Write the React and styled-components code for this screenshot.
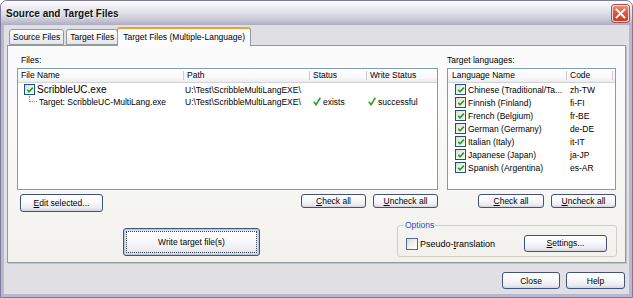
import React from 'react';
import styled, { createGlobalStyle } from 'styled-components';

const Global = createGlobalStyle`
  html, body { margin: 0; padding: 0; background: #ffffff; }
  body { font-family: "Liberation Sans", Arial, sans-serif; font-size: 8.5px; color: #000; }
  * { box-sizing: border-box; }
`;

const Window = styled.div`
  width: 633px;
  height: 298px;
  display: flex;
  flex-direction: column;
  background: #b9b8cf;
  border: 1px solid #7c7b99;
  border-radius: 7px 7px 0 0;
  overflow: hidden;
`;

const TitleBar = styled.div`
  height: 24px;
  flex: none;
  display: flex;
  align-items: center;
  padding: 0 3px 0 5px;
  background: linear-gradient(#fdfdfe 0%, #eeeef4 25%, #dcdce6 55%, #c6c6d6 80%, #adacc4 100%);
`;

const Title = styled.div`
  flex: 1;
  font-size: 10px;
  font-weight: bold;
  color: #141414;
  text-shadow: 1px 1px 0 rgba(255,255,255,0.6);
`;

const CloseBox = styled.div`
  width: 17px;
  height: 17px;
  border-radius: 3px;
  border: 1px solid #f4d4cc;
  background: linear-gradient(#ee8e74 0%, #dd5a3c 45%, #c83c22 100%);
  box-shadow: 0 0 0 1px #a8504a;
  display: flex;
  align-items: center;
  justify-content: center;
`;

const Body = styled.div`
  flex: 1;
  margin: 0 3px 3px 3px;
  background: #e0dfe3;
  display: flex;
  flex-direction: column;
`;

const TabStrip = styled.div`
  height: 20px;
  flex: none;
  display: flex;
  align-items: flex-end;
  padding-left: 5px;
`;

const Tab = styled.div`
  height: ${p => (p.$active ? 19 : 16)}px;
  margin-bottom: ${p => (p.$active ? -1 : 0)}px;
  margin-left: ${p => (p.$active ? -1 : 2)}px;
  padding: ${p => (p.$active ? '3px 5px 0 5px' : '2px 3px 0 3px')};
  border: 1px solid #919b9c;
  border-bottom: ${p => (p.$active ? 'none' : '1px solid #919b9c')};
  border-top: ${p => (p.$active ? '2px solid #f0a030' : '1px solid #919b9c')};
  border-radius: 3px 3px 0 0;
  background: ${p => (p.$active ? '#fcfcfe' : 'linear-gradient(#ffffff, #f2f2f4 60%, #e4e4ea)')};
  position: relative;
  z-index: ${p => (p.$active ? 1 : 0)};
  white-space: nowrap;
  &:first-child { margin-left: 0; }
`;

const Panel = styled.div`
  height: 218px;
  flex: none;
  margin: 0 3px;
  border: 1px solid #919b9c;
  box-shadow: 1px 1px 0 #c0c4c8;
  background: linear-gradient(#fcfcfd, #f7f7f5 60%, #f2f1ec);
  padding: 8px 8px 0 9px;
  display: flex;
  flex-direction: column;
`;

const Grid = styled.div`
  display: grid;
  grid-template-columns: 421px 169px;
  grid-template-rows: 14px 122px 18px;
  column-gap: 9px;
  row-gap: 0;
`;

const Label = styled.div`
  padding-left: ${p => p.$indent || 0}px;
  line-height: 12px;
`;

const ListBox = styled.div`
  border: 1px solid #7f9db9;
  background: #ffffff;
  display: flex;
  flex-direction: column;
  overflow: hidden;
`;

const HeaderRow = styled.div`
  display: grid;
  grid-template-columns: ${p => p.$cols};
  height: 14px;
  flex: none;
  background: linear-gradient(#ffffff, #f8f8fa 70%, #ebebef);
  border-bottom: 1px solid #d2d2da;
`;

const HeaderCell = styled.div`
  padding-left: ${p => p.$pad}px;
  line-height: 13px;
  white-space: nowrap;
  overflow: hidden;
  background: linear-gradient(#c9c9cf, #c9c9cf) no-repeat right 2px / 1px 9px;
`;

const Row = styled.div`
  display: grid;
  grid-template-columns: ${p => p.$cols};
  height: ${p => p.$h}px;
  flex: none;
  align-items: center;
`;

const Cell = styled.div`
  padding-left: ${p => p.$pad || 0}px;
  display: flex;
  align-items: center;
  white-space: nowrap;
  overflow: hidden;
  font-size: ${p => p.$fs || 8.5}px;
  height: 100%;
`;

const BoxCheck = styled.span`
  width: ${p => p.$size}px;
  height: ${p => p.$size}px;
  flex: none;
  border: 1px solid ${p => p.$border || '#1c5180'};
  background: linear-gradient(135deg, #dcdcd6 0%, #f4f4f0 60%, #ffffff 100%);
  display: inline-flex;
  align-items: center;
  justify-content: center;
  margin-right: ${p => p.$gap}px;
`;

const TreeLine = styled.span`
  width: 8px;
  height: 6px;
  flex: none;
  align-self: flex-start;
  margin-left: 11px;
  margin-right: 2px;
  border-left: 1px dotted #8c8c8c;
  border-bottom: 1px dotted #8c8c8c;
`;

const Status = styled.span`
  display: inline-flex;
  align-items: center;
  gap: 2px;
`;

const ButtonRow = styled.div`
  display: flex;
  align-items: flex-start;
  gap: 7px;
  padding-left: ${p => p.$pad || 0}px;
  margin-top: 4px;
  justify-content: ${p => p.$justify || 'flex-start'};
`;

const Spacer = styled.div`
  flex: 1;
`;

const Button = styled.button`
  font: inherit;
  font-size: 8.5px;
  color: #000;
  width: ${p => p.$w}px;
  height: ${p => p.$h}px;
  flex: none;
  padding: 0;
  margin-top: ${p => p.$top || 0}px;
  border: 1px solid #42527a;
  border-radius: 3px;
  background: linear-gradient(#ffffff 0%, #fafafc 40%, #ececf2 80%, #d4d4de 100%);
  display: flex;
  align-items: center;
  justify-content: center;
  box-shadow: ${p => (p.$default ? 'inset 0 0 0 1px #b4c8e8, inset 0 0 0 2px #d4e0f4' : 'none')};
  outline: ${p => (p.$default ? '1px dotted #404040' : 'none')};
  outline-offset: -4px;
`;

const BottomRow = styled.div`
  display: flex;
  align-items: flex-start;
  margin-top: 12px;
  padding-left: 106px;
`;

const Options = styled.fieldset`
  margin: 0 0 0 auto;
  width: 220px;
  height: 37px;
  border: 1px solid #cfcfc4;
  border-radius: 3px;
  padding: 0 9px 0 8px;
  display: flex;
  align-items: center;
`;

const Legend = styled.legend`
  color: #1f4ed8;
  padding: 0 1px;
  margin-left: -2px;
  font-size: 8.5px;
`;

const OptCheck = styled.label`
  display: flex;
  align-items: center;
  flex: 1;
  font-size: 9px;
  padding-top: 1px;
`;

const Footer = styled.div`
  display: flex;
  justify-content: flex-end;
  gap: 6px;
  margin-top: 9px;
  padding-right: 4px;
`;

const U = styled.span`
  text-decoration: underline;
`;

const GreenTick = ({ s = 8 }) => (
  <svg width={s} height={s} viewBox="0 0 8 8">
    <path d="M1.2 3.8 L3 5.8 L6.9 1.6" fill="none" stroke="#21a121" strokeWidth="1.6" />
  </svg>
);

const StatusTick = () => (
  <svg width="8" height="9" viewBox="0 0 8 9">
    <path d="M0.8 4.6 L3 7.8 L7.4 0.8" fill="none" stroke="#2aa02a" strokeWidth="1.6" />
  </svg>
);

const fileCols = '166px 126px 57px 71px';
const langCols = '119px 46px';

const languages = [
  ['Chinese (Traditional/Ta...', 'zh-TW'],
  ['Finnish (Finland)', 'fi-FI'],
  ['French (Belgium)', 'fr-BE'],
  ['German (Germany)', 'de-DE'],
  ['Italian (Italy)', 'it-IT'],
  ['Japanese (Japan)', 'ja-JP'],
  ['Spanish (Argentina)', 'es-AR'],
];

export default function App() {
  return (
    <>
      <Global />
      <Window>
        <TitleBar>
          <Title>Source and Target Files</Title>
          <CloseBox>
            <svg width="11" height="11" viewBox="0 0 11 11">
              <path d="M1.5 1.5 L9.5 9.5 M9.5 1.5 L1.5 9.5" stroke="#ffffff" strokeWidth="1.8" strokeLinecap="square" />
            </svg>
          </CloseBox>
        </TitleBar>
        <Body>
          <TabStrip>
            <Tab>Source Files</Tab>
            <Tab>Target Files</Tab>
            <Tab $active>Target Files (Multiple-Language)</Tab>
          </TabStrip>
          <Panel>
            <Grid>
              <Label $indent={4}>Files:</Label>
              <Label>Target languages:</Label>
              <ListBox>
                <HeaderRow $cols={fileCols}>
                  <HeaderCell $pad={3}>File Name</HeaderCell>
                  <HeaderCell $pad={3}>Path</HeaderCell>
                  <HeaderCell $pad={3}>Status</HeaderCell>
                  <HeaderCell $pad={3}>Write Status</HeaderCell>
                </HeaderRow>
                <Row $cols={fileCols} $h={13}>
                  <Cell $pad={6} $fs={10}>
                    <BoxCheck $size={11} $gap={2}><GreenTick /></BoxCheck>
                    ScribbleUC.exe
                  </Cell>
                  <Cell $pad={1}>U:\Test\ScribbleMultiLangEXE\</Cell>
                  <Cell />
                  <Cell />
                </Row>
                <Row $cols={fileCols} $h={11}>
                  <Cell>
                    <TreeLine />
                    Target: ScribbleUC-MultiLang.exe
                  </Cell>
                  <Cell $pad={1}>U:\Test\ScribbleMultiLangEXE\</Cell>
                  <Cell $pad={3}><Status><StatusTick />exists</Status></Cell>
                  <Cell $pad={1}><Status><StatusTick />successful</Status></Cell>
                </Row>
              </ListBox>
              <ListBox>
                <HeaderRow $cols={langCols}>
                  <HeaderCell $pad={4}>Language Name</HeaderCell>
                  <HeaderCell $pad={3}>Code</HeaderCell>
                </HeaderRow>
                {languages.map(([name, code]) => (
                  <Row key={code} $cols={langCols} $h={13}>
                    <Cell $pad={7}>
                      <BoxCheck $size={11} $gap={2}><GreenTick /></BoxCheck>
                      {name}
                    </Cell>
                    <Cell $pad={3}>{code}</Cell>
                  </Row>
                ))}
              </ListBox>
              <ButtonRow $pad={3}>
                <Button $w={83} $h={18}><U>E</U>dit selected...</Button>
                <Spacer />
                <Button $w={65} $h={14}><U>C</U>heck all</Button>
                <Button $w={65} $h={14}><U>U</U>ncheck all</Button>
              </ButtonRow>
              <ButtonRow $justify="flex-end">
                <Button $w={66} $h={14}><U>C</U>heck all</Button>
                <Button $w={65} $h={14}><U>U</U>ncheck all</Button>
              </ButtonRow>
            </Grid>
            <BottomRow>
              <Button $w={137} $h={28} $top={8} $default>Write target file(s)</Button>
              <Options>
                <Legend>Options</Legend>
                <OptCheck>
                  <BoxCheck $size={12} $gap={2} $border="#5a6a8a" />
                  Pseudo-<U>t</U>ranslation
                </OptCheck>
                <Button $w={83} $h={17}><U>S</U>ettings...</Button>
              </Options>
            </BottomRow>
          </Panel>
          <Footer>
            <Button $w={58} $h={17}>Close</Button>
            <Button $w={59} $h={17}>Help</Button>
          </Footer>
        </Body>
      </Window>
    </>
  );
}
